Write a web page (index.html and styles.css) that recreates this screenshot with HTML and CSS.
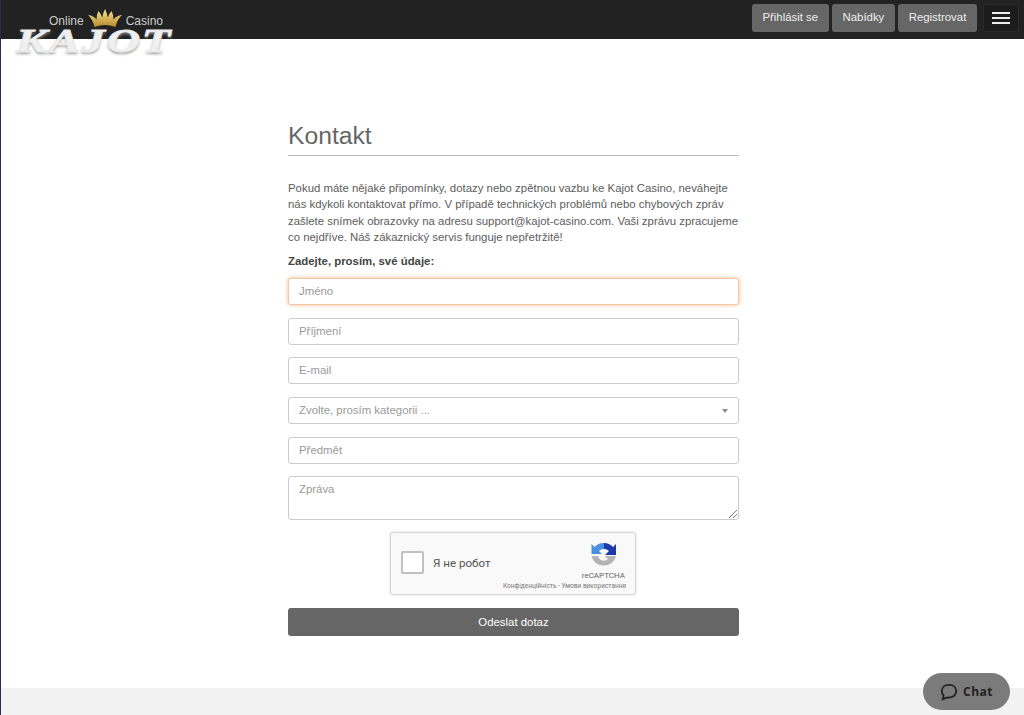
FILE: index.html
```html
<!DOCTYPE html>
<html lang="cs">
<head>
<meta charset="utf-8">
<title>Kontakt - Kajot Casino</title>
<link rel="stylesheet" href="styles.css">
</head>
<body>
<header class="topbar">
  <a class="logo" href="#">
    <span class="logo-line"><span>Online</span>
      <svg class="crown" viewBox="0 0 36 20" width="34" height="19"><defs><linearGradient id="g" x1="0" y1="0" x2="0" y2="1"><stop offset="0" stop-color="#f8e39a"/><stop offset="1" stop-color="#b98a2a"/></linearGradient></defs><path d="M0 6 Q6 7 9 11 Q9 6 11 2 Q14 5 15 9 Q16 4 18 0 Q20 4 21 9 Q22 5 25 2 Q27 6 27 11 Q30 7 36 6 Q31 11 29 19 Q18 15 7 19 Q5 11 0 6 Z" fill="url(#g)"/></svg>
      <span>Casino</span></span>
    <span class="logo-word">KAJOT</span>
  </a>
  <nav class="actions">
    <a class="btn" href="#">Přihlásit se</a>
    <a class="btn" href="#">Nabídky</a>
    <a class="btn" href="#">Registrovat</a>
    <button class="burger" aria-label="Menu"><span></span><span></span><span></span></button>
  </nav>
</header>
<main class="content">
  <h1 class="title">Kontakt</h1>
  <p class="intro">Pokud máte nějaké připomínky, dotazy nebo zpětnou vazbu ke Kajot Casino, neváhejte nás kdykoli kontaktovat přímo. V případě technických problémů nebo chybových zpráv zašlete snímek obrazovky na adresu support@kajot-casino.com. Vaši zprávu zpracujeme co nejdříve. Náš zákaznický servis funguje nepřetržitě!</p>
  <p class="lead">Zadejte, prosím, své údaje:</p>
  <form class="form">
    <div class="field focus">Jméno</div>
    <div class="field">Příjmení</div>
    <div class="field">E-mail</div>
    <div class="field select">Zvolte, prosím kategorii ...<span class="caret"></span></div>
    <div class="field">Předmět</div>
    <div class="field area">Zpráva
      <svg class="grip" viewBox="0 0 8 8" width="8" height="8"><path d="M0 8 L8 0 M4 8 L8 4" stroke="#777" stroke-width="1" fill="none"/></svg>
    </div>
    <div class="captcha">
      <span class="check"></span>
      <span class="robot">Я не робот</span>
      <div class="brand">
        <svg viewBox="0 0 25 25" width="25" height="25"><path d="M13 0 A12.500 12.500 0 0 0 3.600 4 L0.500 1 L0.500 11 L11 11 L8 8 A6.500 6.500 0 0 1 13 6 Z" fill="#4a90e2"/><path d="M13 0 A12.500 12.500 0 0 1 22 4 L25 1 L25 12 L14 12 L18 8 A6.500 6.500 0 0 0 13 6 Z" fill="#1c3aa9"/><path d="M0.500 13 L7 13 A6 6 0 0 0 17 16 L13.500 13 L25 13 A12.500 12 0 0 1 0.500 13 Z" fill="#b4b4b4"/></svg>
        <span class="re">reCAPTCHA</span>
      </div>
      <span class="terms">Конфіденційність - Умови використання</span>
    </div>
    <button class="submit" type="button">Odeslat dotaz</button>
  </form>
</main>
<footer class="foot"></footer>
<a class="chat" href="#">
  <svg viewBox="0 0 20 20" width="18" height="18"><path d="M10 2 C5 2 2 5 2 9 C2 11.500 3 13 4 14 L3 18 L8 16 C13 17 18 14 18 9 C18 5 15 2 10 2 Z" fill="none" stroke="#222" stroke-width="2"/></svg>
  <span>Chat</span>
</a>
</body>
</html>
```
FILE: styles.css
```css
* { box-sizing: border-box; }
html, body { height: 100%; }
body {
  margin: 0;
  height: 715px;
  overflow: hidden;
  display: flex;
  flex-direction: column;
  font-family: "Liberation Sans", Arial, sans-serif;
  color: #5c5c5c;
  background: #fff;
  border-left: 1px solid #2a2a50;
  position: relative;
}
.topbar {
  height: 39px;
  flex: none;
  background: #222;
  display: flex;
  justify-content: flex-end;
  align-items: flex-start;
  padding: 4px 5px 0 0;
}
.logo {
  position: absolute;
  left: 12px;
  top: 9px;
  width: 162px;
  text-decoration: none;
}
.logo-line {
  display: flex;
  justify-content: center;
  align-items: flex-start;
  gap: 4px;
  color: #ccc;
  font-size: 12px;
  line-height: 14px;
  padding: 5px 0 0 24px;
  height: 18px;
}
.crown { margin-top: -5px; }
.logo-word {
  display: block;
  text-align: center;
  font-family: "Liberation Serif", serif;
  font-style: italic;
  font-weight: 700;
  font-size: 30px;
  line-height: 28px;
  letter-spacing: 1px;
  color: #f0f0f0;
  -webkit-text-stroke: 0.7px #e8e8e8;
  transform: scale(1.56, 1.15);
  transform-origin: center;
  text-shadow: 0 1px 2px #999;
}
.actions { display: flex; gap: 3px; }
.btn {
  height: 28px;
  padding: 0 10.700px;
  line-height: 27px;
  font-size: 11.400px;
  color: #eee;
  background: #666;
  border-radius: 3px;
  text-decoration: none;
  display: block;
}
.burger {
  width: 36px;
  height: 28px;
  margin-left: 3px;
  padding: 7px 8px;
  background: #1c1c1c;
  border: 1px solid #2a2a2a;
  border-radius: 3px;
  display: flex;
  flex-direction: column;
  justify-content: space-between;
}
.burger span { display: block; height: 2px; background: #eee; }
.content {
  flex: 1;
  width: 451px;
  align-self: center;
  margin-left: 2px;
  padding-top: 79px;
  font-size: 11.400px;
}
.title {
  margin: 0;
  height: 38px;
  font-size: 24.700px;
  font-weight: 400;
  line-height: 35px;
  color: #666;
  border-bottom: 1px solid #bbb;
}
.intro {
  margin: 24px 0 0;
  line-height: 16.300px;
}
.lead {
  margin: 8px 0 0;
  font-weight: 700;
  line-height: 16px;
  color: #444;
}
.form {
  margin-top: 9px;
  display: flex;
  flex-direction: column;
  gap: 12.600px;
}
.field {
  position: relative;
  height: 27px;
  padding: 0 10px;
  line-height: 25px;
  color: #999;
  background: #fff;
  border: 1px solid #ccc;
  border-radius: 3px;
}
.focus {
  border-color: #f0c8a8;
  box-shadow: 0 0 4px #f3b88a;
}
.caret {
  position: absolute;
  right: 10px;
  top: 11px;
  border: 3.500px solid transparent;
  border-top: 4px solid #888;
  border-bottom: 0;
}
.area { height: 44px; }
.grip { position: absolute; right: 1px; bottom: 1px; }
.captcha {
  position: relative;
  align-self: center;
  width: 246px;
  height: 63px;
  display: flex;
  align-items: center;
  margin: -0.600px 0 0 -1px;
  background: #f9f9f9;
  border: 1px solid #d6d6d6;
  border-radius: 3px;
  box-shadow: 0 0 3px #ddd;
}
.check {
  width: 23px;
  height: 23px;
  margin: -2px 0 0 10px;
  background: #fff;
  border: 2px solid #c1c1c1;
  border-radius: 2px;
}
.robot {
  margin: -2px 0 0 9px;
  font-family: Roboto, sans-serif;
  font-size: 11.600px;
  color: #555;
}
.brand {
  position: absolute;
  right: 10px;
  top: 9.500px;
  display: flex;
  flex-direction: column;
  align-items: center;
  font-family: Roboto, sans-serif;
}
.re { font-size: 8px; line-height: 10px; color: #666; margin-top: 3px; }
.terms {
  position: absolute;
  right: 9px;
  bottom: 4px;
  font-family: Roboto, sans-serif;
  font-size: 6.500px;
  line-height: 8px;
  color: #777;
  white-space: nowrap;
}
.submit {
  height: 28px;
  font: 11.400px "Liberation Sans", Arial, sans-serif;
  color: #fff;
  background: #666;
  border: 0;
  border-radius: 3px;
}
.foot {
  flex: none;
  height: 27px;
  background: #f2f2f2;
}
.chat {
  position: absolute;
  left: 922px;
  top: 673px;
  width: 87px;
  height: 37px;
  display: flex;
  align-items: center;
  justify-content: center;
  gap: 5px;
  background: #7b7b7b;
  border-radius: 19px;
  color: #222;
  font-family: "Open Sans", sans-serif;
  font-size: 12px;
  font-weight: 700;
  letter-spacing: .5px;
  text-decoration: none;
}
```
